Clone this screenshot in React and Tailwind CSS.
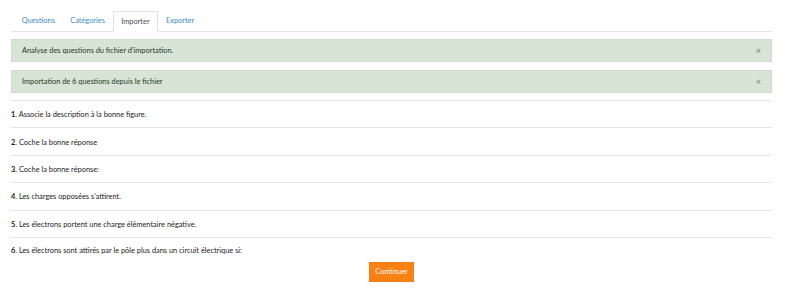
import React from 'react';

const tabs = ['Questions', 'Catégories', 'Importer', 'Exporter'];

const alerts = [
    "Analyse des questions du fichier d'importation.",
    'Importation de 6 questions depuis le fichier',
];

const questions = [
    'Associe la description à la bonne figure.',
    'Coche la bonne réponse',
    'Coche la bonne réponse:',
    "Les charges opposées s'attirent.",
    'Les électrons portent une charge élémentaire négative.',
    'Les électrons sont attirés par le pôle plus dans un circuit électrique si:',
];

const App = () => {
    return (
        <div className="w-[786px] h-[293px] bg-white pl-[11px] pr-[14px] pt-[11px] text-[7.4px] text-[#1d2125]" style={{ fontFamily: 'Lato, "Liberation Sans", sans-serif' }}>
            {/* Tabs */}
            <div className="flex border-b border-[#e5e5e5] pl-[3px] h-[21px]">
                {tabs.map((t) => (
                    t === 'Importer' ? (
                        <div key={t} className="h-[21px] px-[7.7px] flex items-center bg-white border border-[#dee2e6] border-b-white -mb-px text-[#495057]">{t}</div>
                    ) : (
                        <div key={t} className="h-[20px] px-[7.7px] flex items-center text-[#3a8ac4]">{t}</div>
                    )
                ))}
            </div>

            {/* Alerts */}
            <div className="mt-[7px] flex flex-col gap-[8px]">
                {alerts.map((a, i) => (
                    <div key={i} className="h-[23px] flex items-center justify-between bg-[#d8e4d6] border border-[#d0ddce] pl-[10px] pr-[10px] text-[#1f3a1d]">
                        <span>{a}</span>
                        <span className="text-[9px] text-[#7b857a] leading-none">×</span>
                    </div>
                ))}
            </div>

            {/* Questions */}
            <div className="mt-[7px] border-t border-[#e6e6e6]">
                {questions.map((q, i) => (
                    <div key={i} className={`flex items-center pt-px ${i < questions.length - 1 ? 'h-[27.4px] border-b border-[#e6e6e6]' : 'h-[24px]'}`}>
                        <span><b className="font-bold">{i + 1}</b>. {q}</span>
                    </div>
                ))}
            </div>

            <div className="flex justify-center">
                <button className="h-[20px] w-[45px] bg-[#f98012] text-white">Continuer</button>
            </div>
        </div>
    );
};

export default App;
